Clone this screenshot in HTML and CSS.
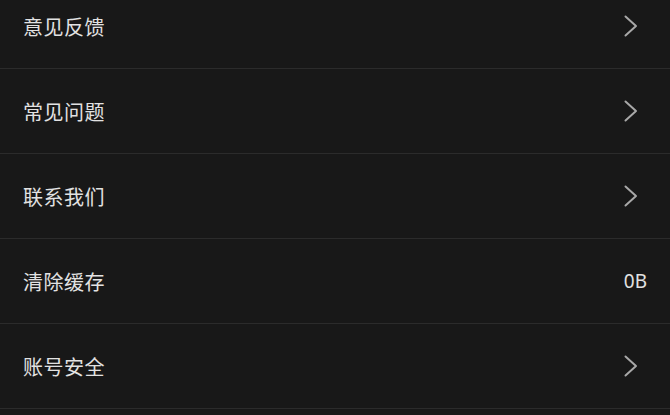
FILE: index.html
```html
<!DOCTYPE html>
<html lang="zh-CN">
<head>
<meta charset="utf-8">
<link rel="stylesheet" href="styles.css">
</head>
<body>
<ul class="list">
  <li class="row"><span class="label">意见反馈</span><svg class="chev" width="14" height="22" viewBox="0 0 14 22"><path d="M1.5 1.5 L12 11 L1.5 20.5" fill="none" stroke="currentColor" stroke-width="2" stroke-linecap="round" stroke-linejoin="round"/></svg></li>
  <li class="row"><span class="label">常见问题</span><svg class="chev" width="14" height="22" viewBox="0 0 14 22"><path d="M1.5 1.5 L12 11 L1.5 20.5" fill="none" stroke="currentColor" stroke-width="2" stroke-linecap="round" stroke-linejoin="round"/></svg></li>
  <li class="row"><span class="label">联系我们</span><svg class="chev" width="14" height="22" viewBox="0 0 14 22"><path d="M1.5 1.5 L12 11 L1.5 20.5" fill="none" stroke="currentColor" stroke-width="2" stroke-linecap="round" stroke-linejoin="round"/></svg></li>
  <li class="row"><span class="label">清除缓存</span><span class="value">0B</span></li>
  <li class="row"><span class="label">账号安全</span><svg class="chev" width="14" height="22" viewBox="0 0 14 22"><path d="M1.5 1.5 L12 11 L1.5 20.5" fill="none" stroke="currentColor" stroke-width="2" stroke-linecap="round" stroke-linejoin="round"/></svg></li>
</ul>
</body>
</html>
```
FILE: styles.css
```css
html, body {
  margin: 0;
  padding: 0;
  background: #181818;
  overflow: hidden;
}
.list {
  list-style: none;
  margin: -16px 0 0 0;
  padding: 0;
}
.row {
  display: flex;
  align-items: center;
  justify-content: space-between;
  height: 84px;
  padding: 0 32px 0 23px;
  border-bottom: 1px solid #2b2b2b;
  font-family: "Noto Sans CJK SC", "Noto Sans", sans-serif;
}
.label {
  font-size: 20px;
  color: #e2e2e2;
  letter-spacing: 0.5px;
}
.chev {
  color: #a8a8a8;
  display: block;
}
.value {
  font-family: "Noto Sans", "Liberation Sans", sans-serif;
  font-size: 19px;
  color: #e2e2e2;
  margin-right: -9px;
}
```
